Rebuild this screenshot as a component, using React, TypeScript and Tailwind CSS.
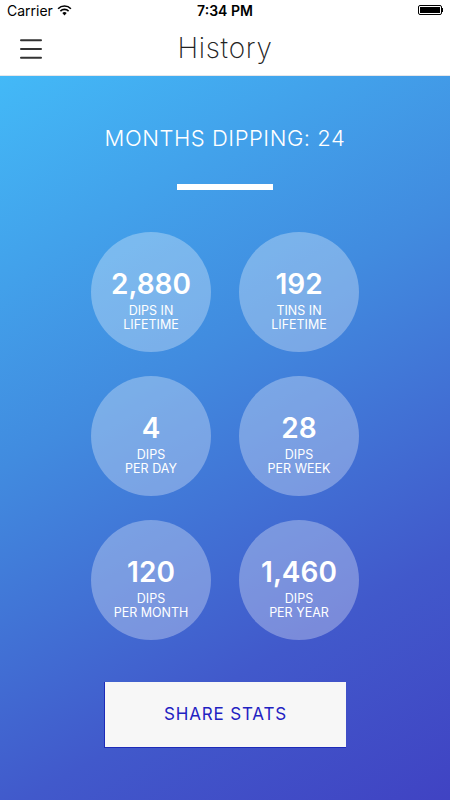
import { Menu } from "lucide-react";

const stats = [
	{ value: "2,880", label: ["DIPS IN", "LIFETIME"] },
	{ value: "192", label: ["TINS IN", "LIFETIME"] },
	{ value: "4", label: ["DIPS", "PER DAY"] },
	{ value: "28", label: ["DIPS", "PER WEEK"] },
	{ value: "120", label: ["DIPS", "PER MONTH"] },
	{ value: "1,460", label: ["DIPS", "PER YEAR"] },
];

const StatusBar = () => (
	<div className="relative flex h-5 items-center justify-between px-[7px] text-[14px] text-black">
		<div className="flex items-center gap-1">
			<span>Carrier</span>
			<svg width="15" height="11" viewBox="0 0 15 11">
				<path d="M7.5 10.5 L5.3 8.1 A3.2 3.2 0 0 1 9.7 8.1 Z" fill="black" />
				<path d="M3.4 6.1 A5.8 5.8 0 0 1 11.6 6.1" stroke="black" strokeWidth="1.6" fill="none" />
				<path d="M1.1 3.7 A9 9 0 0 1 13.9 3.7" stroke="black" strokeWidth="1.6" fill="none" />
			</svg>
		</div>
		<span className="absolute left-1/2 -translate-x-1/2 font-semibold">7:34 PM</span>
		<div className="flex items-center">
			<div className="h-[10px] w-[24px] rounded-[2px] border border-black p-[1px]">
				<div className="h-full w-full bg-black" />
			</div>
			<div className="h-[4px] w-[1.5px] bg-black" />
		</div>
	</div>
);

export default function App() {
	return (
		<div className="flex h-[800px] w-[450px] flex-col overflow-hidden bg-white font-['Inter',sans-serif]">
			<StatusBar />

			{/* Nav bar */}
			<div className="relative flex h-[56px] items-center justify-center border-b border-gray-200">
				<Menu className="absolute left-[16px] top-[14px] h-[30px] w-[30px] text-[#333]" strokeWidth={1.6} />
				<h1 className="text-[28px] font-extralight tracking-wide text-[#222]">History</h1>
			</div>

			{/* Body */}
			<div className="flex flex-1 flex-col items-center bg-[linear-gradient(150deg,#43b9f7_0%,#418bdf_40%,#4159cb_75%,#4043c3_100%)] pt-[46px]">
				<p className="text-[22px] font-light tracking-wide text-white">MONTHS DIPPING: 24</p>
				<div className="mt-[29px] h-[6px] w-[96px] bg-white" />

				<div className="mt-[42px] grid grid-cols-[120px_120px] gap-x-[28px] gap-y-[24px]">
					{stats.map((s) => (
						<div
							key={s.value}
							className="flex h-[120px] w-[120px] flex-col items-center justify-center rounded-full bg-white/30 pt-[16px] text-white"
						>
							<span className="text-[28px] font-semibold leading-[32px]">{s.value}</span>
							<span className="mt-[4px] text-[12.5px] leading-[14px]">{s.label[0]}</span>
							<span className="text-[12.5px] leading-[14px]">{s.label[1]}</span>
						</div>
					))}
				</div>

				<button className="mt-[42px] flex h-[66px] w-[242px] items-center justify-center border-b border-l border-[#1d2bb8] bg-[#f7f7f7] text-[17px] font-normal tracking-wider text-[#1f22c2]">
					SHARE STATS
				</button>
			</div>
		</div>
	);
}
